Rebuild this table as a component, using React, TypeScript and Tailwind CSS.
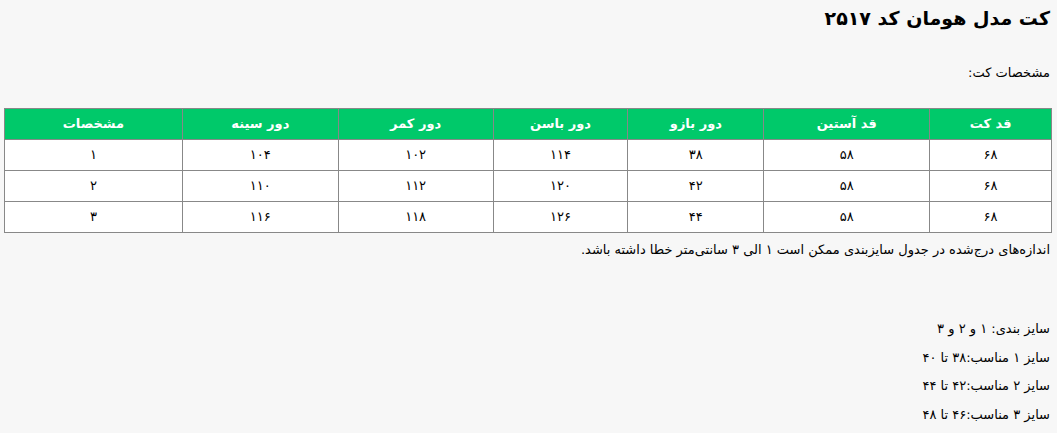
const headers = ["قد کت", "قد آستین", "دور بازو", "دور باسن", "دور کمر", "دور سینه", "مشخصات"]

const rows = [
  ["۶۸", "۵۸", "۳۸", "۱۱۴", "۱۰۲", "۱۰۴", "۱"],
  ["۶۸", "۵۸", "۴۲", "۱۲۰", "۱۱۲", "۱۱۰", "۲"],
  ["۶۸", "۵۸", "۴۴", "۱۲۶", "۱۱۸", "۱۱۶", "۳"],
]

const widths = ["w-[122px]", "w-[166px]", "w-[136px]", "w-[135px]", "w-[155px]", "w-[156px]", "w-[178px]"]

export default function App() {
  return (
    <div dir="rtl" className="min-h-[433px] bg-[#f7f7f7] px-[5px] pt-[6px] font-['DejaVu_Sans',sans-serif] text-[13px] text-black">
      <h1 className="pr-[2px] text-[19px] font-bold leading-[24px]">کت مدل هومان کد ۲۵۱۷</h1>

      <p className="mt-[33px] pr-[2px] leading-[20px]">مشخصات کت:</p>

      <table className="mt-[25px] w-[1048px] border-collapse border border-[#888]">
        <thead>
          <tr className="bg-[#00c96a] text-white">
            {headers.map((h, i) => (
              <th key={h} className={`${widths[i]} h-[31px] border-x border-[#888] text-center text-[13px] font-bold`}>
                {h}
              </th>
            ))}
          </tr>
        </thead>
        <tbody>
          {rows.map((row, r) => (
            <tr key={r} className="bg-white">
              {row.map((cell, c) => (
                <td key={c} className="h-[31px] border border-[#888] text-center text-[13px]">
                  {cell}
                </td>
              ))}
            </tr>
          ))}
        </tbody>
      </table>

      <p className="mt-[6px] pr-[2px] leading-[22px]">
        اندازه‌های درج‌شده در جدول سایزبندی ممکن است ۱ الی ۳ سانتی‌متر خطا داشته باشد.
      </p>

      <div className="mt-[58px] space-y-[8.5px] pr-[2px] leading-[20px]">
        <p>سایز بندی: ۱ و ۲ و ۳</p>
        <p>سایز ۱ مناسب:۳۸ تا ۴۰</p>
        <p>سایز ۲ مناسب:۴۲ تا ۴۴</p>
        <p>سایز ۳ مناسب:۴۶ تا ۴۸</p>
      </div>
    </div>
  )
}
